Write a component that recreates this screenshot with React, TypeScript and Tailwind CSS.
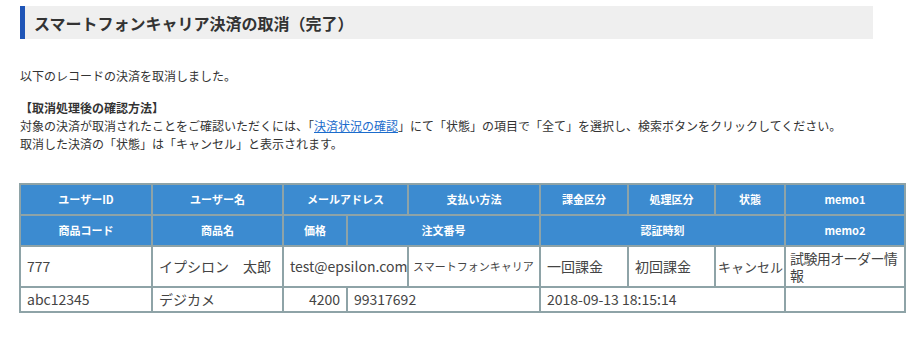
import React from "react";

const th = "border-2 border-[#8ea3a7] bg-[#3c8bd0] text-white font-bold text-[11px] text-center h-[31px] p-0";
const base = "border-2 border-[#8ea3a7] bg-white text-[#444] align-middle";
const td = base + " text-[14px] px-[6px]";

export default function App() {
  return (
    <div className="w-[910px] h-[351px] bg-white text-[#333] overflow-hidden" style={{ fontFamily: '"Noto Sans CJK JP", "DejaVu Sans", sans-serif' }}>
      <div className="pt-[6px] pl-[20px] pr-[37px]">
        <div className="flex items-center h-[33px] bg-[#efefef] border-l-[5px] border-[#1f55b7]">
          <h1 className="pl-[9px] text-[16px] font-bold text-[#333] leading-none">スマートフォンキャリア決済の取消（完了）</h1>
        </div>
      </div>
      <div className="pl-[20px] pt-[28px] text-[12px] leading-[18px]">
        <p>以下のレコードの決済を取消しました。</p>
        <p className="mt-[14px] font-bold">【取消処理後の確認方法】</p>
        <p>
          対象の決済が取消されたことをご確認いただくには、「<a className="text-[#1b6ccc] underline">決済状況の確認</a>」にて「状態」の項目で「全て」を選択し、検索ボタンをクリックしてください。
        </p>
        <p>取消した決済の「状態」は「キャンセル」と表示されます。</p>
      </div>
      <div className="pl-[19px] pt-[30px]">
        <table className="border-collapse table-fixed w-[885px]">
          <colgroup>
            <col className="w-[132px]" />
            <col className="w-[131px]" />
            <col className="w-[64px]" />
            <col className="w-[61px]" />
            <col className="w-[132px]" />
            <col className="w-[88px]" />
            <col className="w-[87px]" />
            <col className="w-[70px]" />
            <col className="w-[120px]" />
          </colgroup>
          <tbody>
            <tr>
              <th className={th}>ユーザーID</th>
              <th className={th}>ユーザー名</th>
              <th className={th} colSpan={2}>メールアドレス</th>
              <th className={th}>支払い方法</th>
              <th className={th}>課金区分</th>
              <th className={th}>処理区分</th>
              <th className={th}>状態</th>
              <th className={th}>memo1</th>
            </tr>
            <tr>
              <th className={th}>商品コード</th>
              <th className={th}>商品名</th>
              <th className={th}>価格</th>
              <th className={th} colSpan={2}>注文番号</th>
              <th className={th} colSpan={3}>認証時刻</th>
              <th className={th}>memo2</th>
            </tr>
            <tr className="h-[41px]">
              <td className={td}>777</td>
              <td className={td}>イプシロン　太郎</td>
              <td className={td + " whitespace-nowrap"} colSpan={2}>test@epsilon.com</td>
              <td className={base + " text-[11px] whitespace-nowrap px-[4px]"}>スマートフォンキャリア</td>
              <td className={td}>一回課金</td>
              <td className={td}>初回課金</td>
              <td className={base + " text-[13px] whitespace-nowrap px-[2px]"}>キャンセル</td>
              <td className={base + " text-[14px] leading-[17px] py-[2px] px-[4px] tracking-[-0.6px]"}>試験用オーダー情報</td>
            </tr>
            <tr className="h-[25px]">
              <td className={td}>abc12345</td>
              <td className={td}>デジカメ</td>
              <td className={td + " text-right"}>4200</td>
              <td className={td} colSpan={2}>99317692</td>
              <td className={td} colSpan={3}>2018-09-13 18:15:14</td>
              <td className={td}></td>
            </tr>
          </tbody>
        </table>
      </div>
    </div>
  );
}
